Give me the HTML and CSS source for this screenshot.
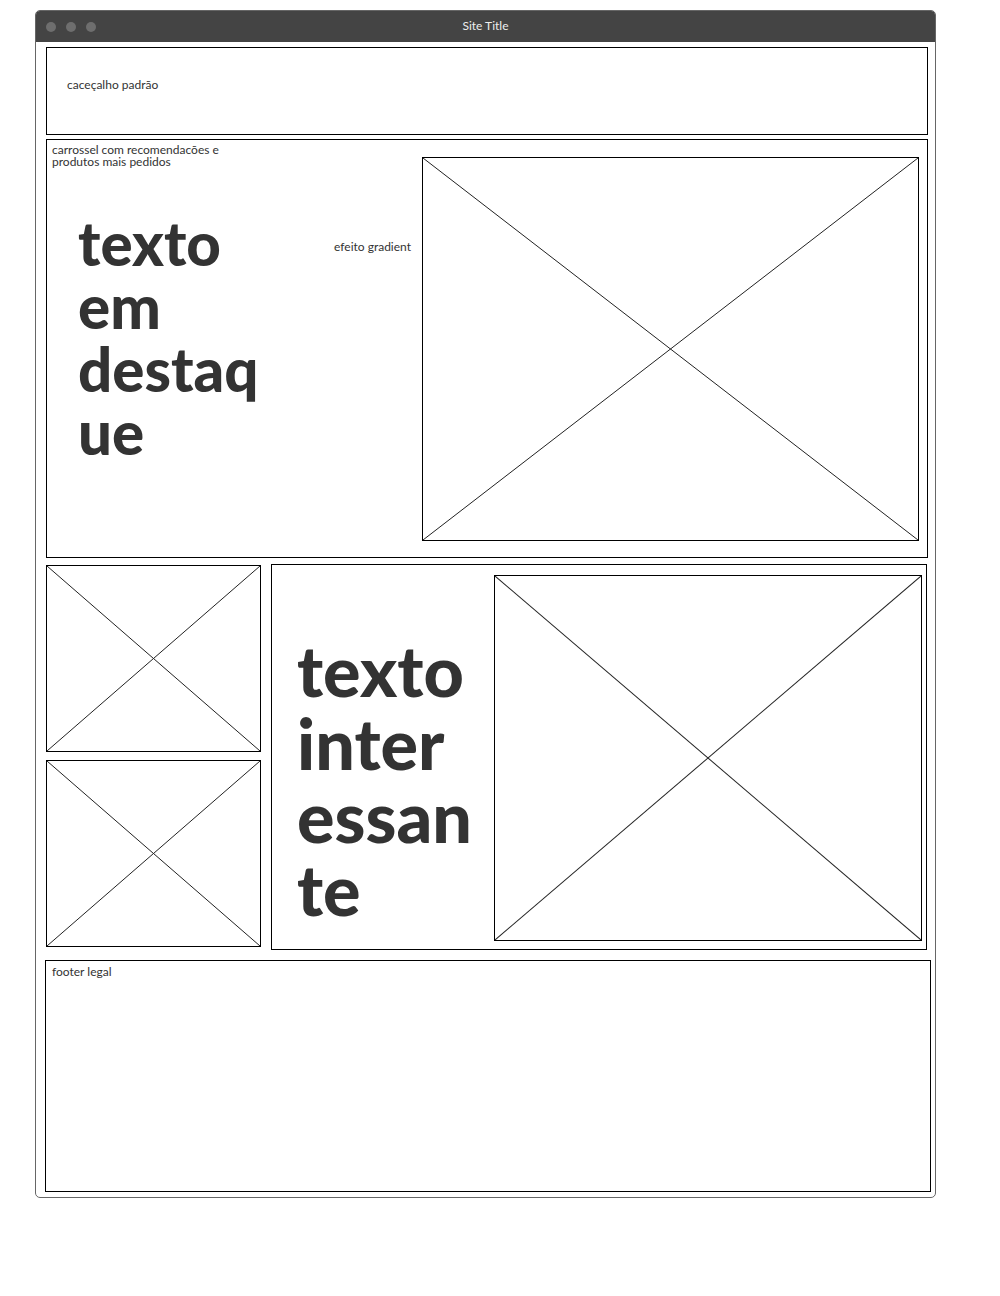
FILE: index.html
```html
<!DOCTYPE html>
<html lang="pt">
<head>
  <meta charset="UTF-8" />
  <meta name="viewport" content="width=device-width, initial-scale=1.0" />
  <title>Site Title</title>
  <link rel="stylesheet" href="styles.css">
</head>
<body>

  <div class="window">
    <div class="titlebar">
      <div class="dots">
        <span></span>
        <span></span>
        <span></span>
      </div>
      <span class="site-title">Site Title</span>
    </div>

    <div class="content">
      <header class="box header">
        <span class="label">caceçalho padrão</span>
      </header>

      <section class="box carousel">
        <div class="carousel-text">
          <p class="label">carrossel com recomendacões e<br>produtos mais pedidos</p>
          <h1 class="big-text">texto<br>em<br>destaq<br>ue</h1>
        </div>
        <div class="gradient-note">
          <span class="label">efeito gradient</span>
        </div>
        <div class="placeholder carousel-img">
          <svg viewBox="0 0 100 100" preserveAspectRatio="none">
            <line x1="0" y1="0" x2="100" y2="100" vector-effect="non-scaling-stroke" />
            <line x1="100" y1="0" x2="0" y2="100" vector-effect="non-scaling-stroke" />
          </svg>
        </div>
      </section>

      <section class="features">
        <div class="thumbs">
          <div class="placeholder thumb">
            <svg viewBox="0 0 100 100" preserveAspectRatio="none">
              <line x1="0" y1="0" x2="100" y2="100" vector-effect="non-scaling-stroke" />
              <line x1="100" y1="0" x2="0" y2="100" vector-effect="non-scaling-stroke" />
            </svg>
          </div>
          <div class="placeholder thumb">
            <svg viewBox="0 0 100 100" preserveAspectRatio="none">
              <line x1="0" y1="0" x2="100" y2="100" vector-effect="non-scaling-stroke" />
              <line x1="100" y1="0" x2="0" y2="100" vector-effect="non-scaling-stroke" />
            </svg>
          </div>
        </div>

        <div class="box highlight">
          <h2 class="big-text big-text-lg">texto<br>inter<br>essan<br>te</h2>
          <div class="placeholder highlight-img">
            <svg viewBox="0 0 100 100" preserveAspectRatio="none">
              <line x1="0" y1="0" x2="100" y2="100" vector-effect="non-scaling-stroke" />
              <line x1="100" y1="0" x2="0" y2="100" vector-effect="non-scaling-stroke" />
            </svg>
          </div>
        </div>
      </section>

      <footer class="box footer">
        <span class="label">footer legal</span>
      </footer>
    </div>
  </div>

</body>
</html>
```

FILE: styles.css
```css
* {
  box-sizing: border-box;
}

body {
  margin: 0;
  padding: 10px 0 0 35px;
  font-family: Lato, 'Noto Sans', sans-serif;
  color: #333;
  background: #fff;
}

.window {
  width: 901px;
  border: 1px solid #666;
  border-radius: 5px;
  overflow: hidden;
}

.titlebar {
  height: 31px;
  background: #444;
  display: flex;
  align-items: center;
  position: relative;
}

.dots {
  display: flex;
  gap: 10px;
  padding-left: 10px;
}

.dots span {
  width: 10px;
  height: 10px;
  border-radius: 50%;
  background: #6e6e6e;
}

.site-title {
  position: absolute;
  left: 0;
  right: 0;
  top: 7px;
  text-align: center;
  font-size: 12px;
  color: #eee;
}

.content {
  padding: 5px 7px 5px 10px;
  display: flex;
  flex-direction: column;
}

.box {
  border: 1px solid #000;
}

.label {
  display: block;
  font-size: 12px;
  line-height: 12px;
  color: #333;
}

/* header */
.header {
  height: 88px;
  padding: 31px 20px 0;
}

/* carousel */
.carousel {
  margin-top: 4px;
  height: 419px;
  display: flex;
  align-items: center;
}

.carousel-text {
  align-self: stretch;
  width: 270px;
  padding: 4px 5px;
}

.carousel-text .label {
  margin: 0;
}

.big-text {
  margin: 0;
  font-weight: 900;
  color: #333;
  font-size: 60px;
  line-height: 63px;
}

.carousel .big-text {
  margin: 44px 0 0 26px;
}

.gradient-note {
  flex: 1;
  align-self: stretch;
  text-align: right;
  padding: 101px 11px 0 0;
}

.placeholder {
  border: 1px solid #000;
  flex-shrink: 0;
}

.placeholder svg {
  display: block;
  width: 100%;
  height: 100%;
}

.placeholder line {
  stroke: #222;
  stroke-width: 1;
}

.carousel-img {
  width: 497px;
  height: 384px;
  margin-right: 8px;
}

/* features row */
.features {
  margin-top: 6px;
  display: flex;
  gap: 10px;
}

.thumbs {
  display: flex;
  flex-direction: column;
  gap: 8px;
  padding-top: 1px;
}

.thumb {
  width: 215px;
  height: 187px;
}

.highlight {
  width: 656px;
  height: 386px;
  display: flex;
  align-items: center;
  justify-content: space-between;
  padding: 0 4px 0 25px;
}

.big-text-lg {
  font-size: 70px;
  line-height: 73px;
  margin-top: 46px;
}

.highlight-img {
  width: 428px;
  height: 366px;
  margin-top: 1px;
}

/* footer */
.footer {
  margin: 10px -3px 0 -1px;
  height: 232px;
  padding: 5px 6px;
}
```
